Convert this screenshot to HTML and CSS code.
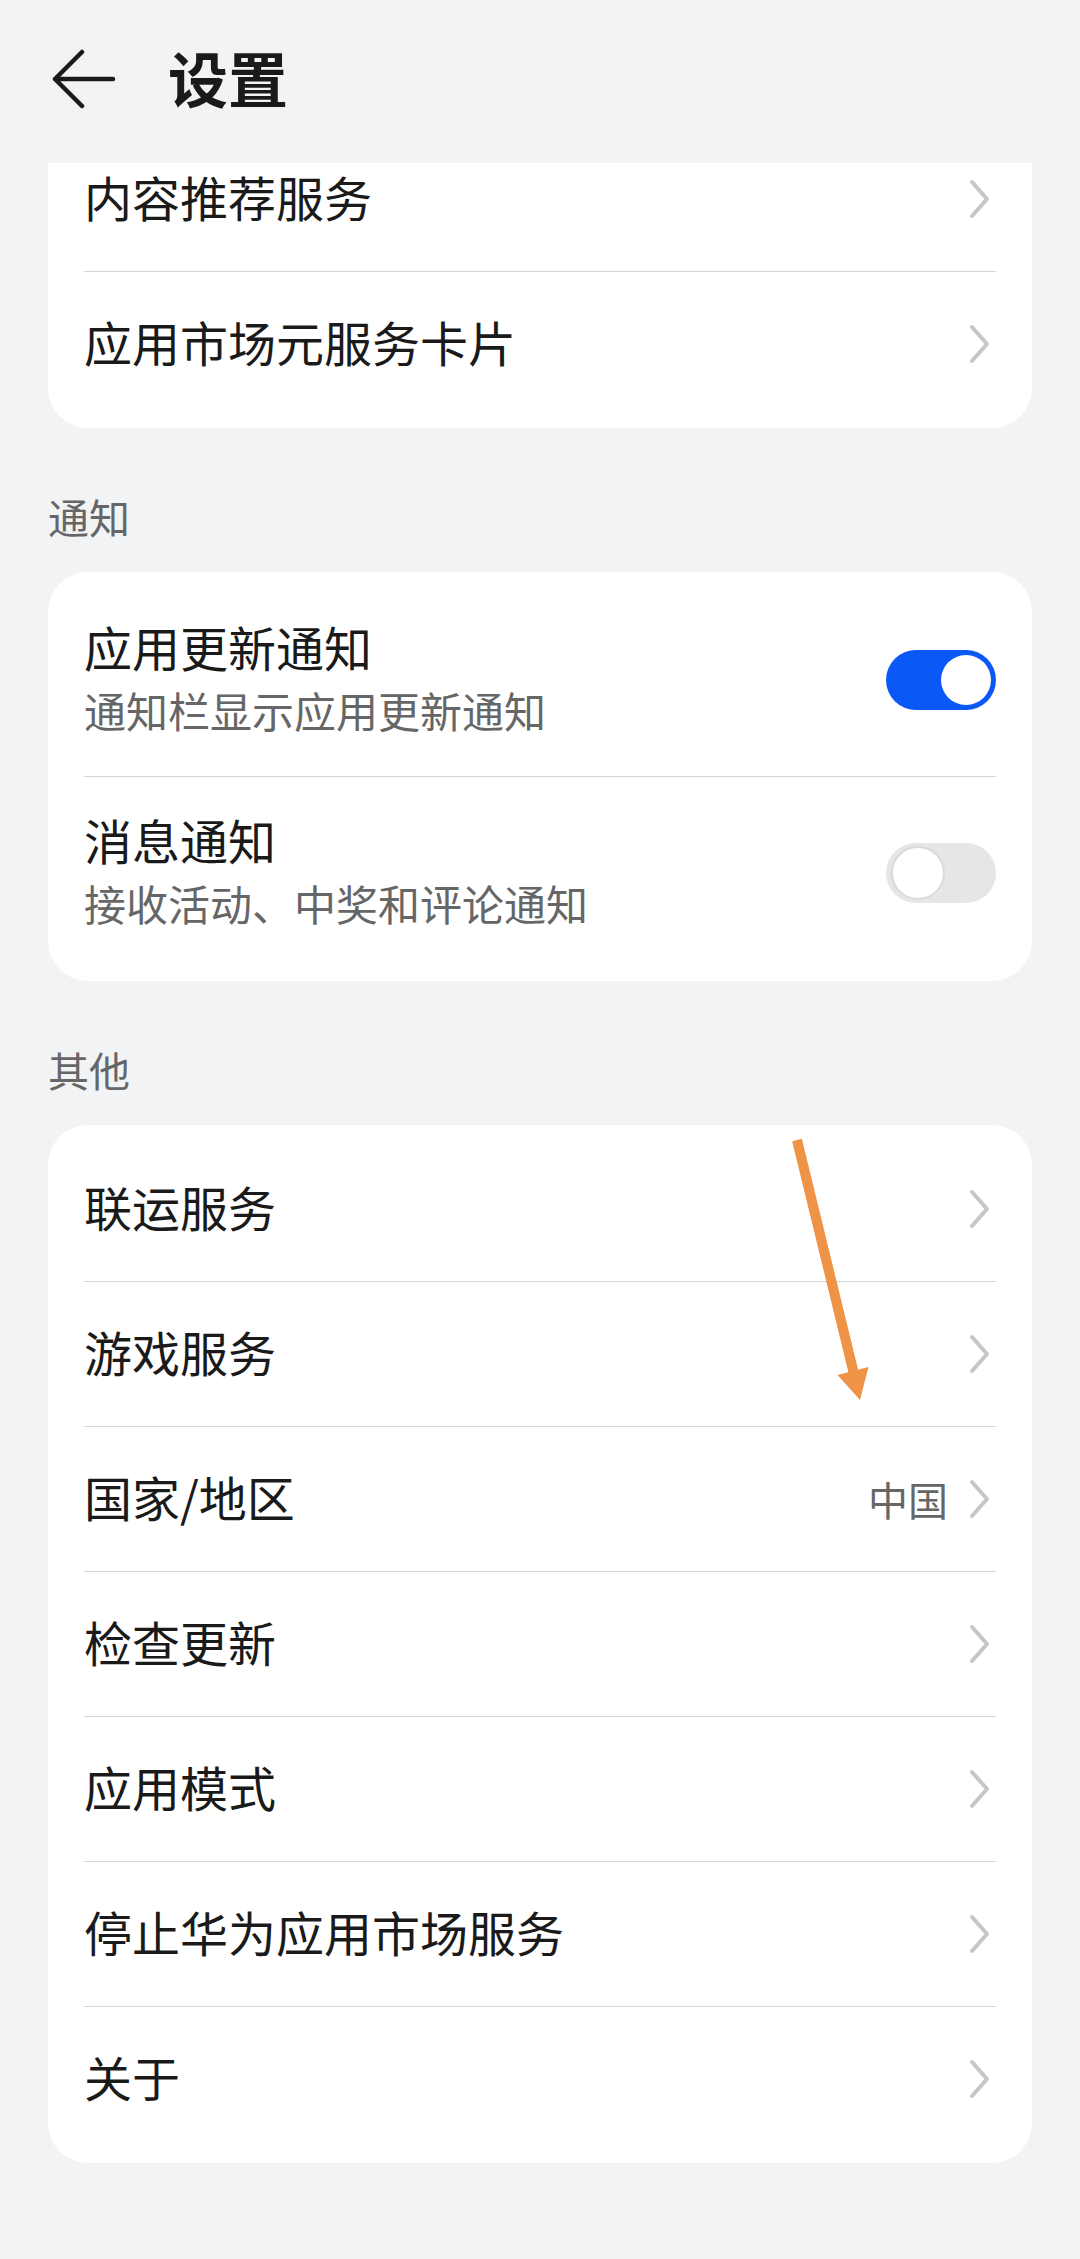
FILE: index.html
```html
<!DOCTYPE html>
<html lang="zh-CN">
<head>
  <meta charset="UTF-8" />
  <meta name="viewport" content="width=device-width, initial-scale=1.0"/>
  <title>设置</title>
  <link rel="stylesheet" href="styles.css">
</head>
<body>
  <div class="screen">
    <header class="topbar">
      <svg class="back" viewBox="0 0 68 60">
        <path d="M32 3 L5 30 L32 57 M5 30 H63" />
      </svg>
      <h1>设置</h1>
    </header>

    <main class="content">
      <section class="card card-cut">
        <div class="row">
          <span class="title">内容推荐服务</span>
          <svg class="chev" viewBox="0 0 28 48"><polyline points="4,7 19,24 4,41" /></svg>
        </div>
        <div class="row">
          <span class="title">应用市场元服务卡片</span>
          <svg class="chev" viewBox="0 0 28 48"><polyline points="4,7 19,24 4,41" /></svg>
        </div>
      </section>

      <h2 class="group">通知</h2>
      <section class="card">
        <div class="row row-tall">
          <div class="text">
            <div class="title">应用更新通知</div>
            <div class="sub">通知栏显示应用更新通知</div>
          </div>
          <span class="switch on"></span>
        </div>
        <div class="row row-tall">
          <div class="text">
            <div class="title">消息通知</div>
            <div class="sub">接收活动、中奖和评论通知</div>
          </div>
          <span class="switch"></span>
        </div>
      </section>

      <h2 class="group">其他</h2>
      <section class="card">
        <div class="row">
          <span class="title">联运服务</span>
          <svg class="chev" viewBox="0 0 28 48"><polyline points="4,7 19,24 4,41" /></svg>
        </div>
        <div class="row">
          <span class="title">游戏服务</span>
          <svg class="chev" viewBox="0 0 28 48"><polyline points="4,7 19,24 4,41" /></svg>
        </div>
        <div class="row">
          <span class="title">国家/地区</span>
          <div class="right">
            <span class="value">中国</span>
            <svg class="chev" viewBox="0 0 28 48"><polyline points="4,7 19,24 4,41" /></svg>
          </div>
        </div>
        <div class="row">
          <span class="title">检查更新</span>
          <svg class="chev" viewBox="0 0 28 48"><polyline points="4,7 19,24 4,41" /></svg>
        </div>
        <div class="row">
          <span class="title">应用模式</span>
          <svg class="chev" viewBox="0 0 28 48"><polyline points="4,7 19,24 4,41" /></svg>
        </div>
        <div class="row">
          <span class="title">停止华为应用市场服务</span>
          <svg class="chev" viewBox="0 0 28 48"><polyline points="4,7 19,24 4,41" /></svg>
        </div>
        <div class="row">
          <span class="title">关于</span>
          <svg class="chev" viewBox="0 0 28 48"><polyline points="4,7 19,24 4,41" /></svg>
        </div>
      </section>
    </main>

    <!-- hand-drawn pointer over the list -->
    <svg class="mark" viewBox="0 0 100 280">
      <line x1="17" y1="10" x2="74" y2="244" />
      <polygon points="57.5,245 88.5,237 80,270" />
    </svg>
  </div>
</body>
</html>
```

FILE: styles.css
```css
* {
  margin: 0;
  padding: 0;
  box-sizing: border-box;
}

body {
  background-color: #f1f3f5;
  font-family: "Noto Sans CJK SC", "Noto Sans", sans-serif;
  color: #1a1a1a;
}

.screen {
  position: relative;
  width: 1080px;
  height: 2259px;
  overflow: hidden;
}

.topbar {
  height: 163px;
  padding: 47px 0 0 50px;
  display: flex;
  align-items: flex-start;
}

.topbar .back {
  width: 68px;
  height: 60px;
  margin-top: 2px;
  fill: none;
  stroke: #1a1a1a;
  stroke-width: 4.5;
  stroke-linecap: round;
  stroke-linejoin: round;
}

.topbar h1 {
  margin-left: 50px;
  font-size: 60px;
  line-height: 60px;
  font-weight: 700;
}

.content {
  height: 2096px;
  overflow: hidden;
  padding: 0 48px;
}

.card {
  background: #fff;
  border-radius: 40px;
  padding: 12px 36px;
}

/* the first card is scrolled under the title bar */
.card-cut {
  margin-top: -48px;
}

.row {
  height: 144px;
  padding-bottom: 6px;
  display: flex;
  align-items: center;
  justify-content: space-between;
}

.row + .row {
  height: 145px;
  border-top: 1px solid #d6d6d6;
}

.row-tall {
  height: 192px;
}

.row-tall + .row-tall {
  height: 193px;
}

.row .chev,
.row .right,
.row .switch {
  margin-bottom: -6px;
}

.title {
  font-size: 48px;
  line-height: 60px;
}

.sub {
  margin-top: 6px;
  font-size: 42px;
  line-height: 56px;
  color: #666;
}

.right {
  display: flex;
  align-items: center;
}

.right .chev {
  margin-bottom: 0;
}

.value {
  margin-right: 20px;
  font-size: 40px;
  line-height: 52px;
  color: #666;
}

.chev {
  width: 28px;
  height: 48px;
  fill: none;
  stroke: #c6c6c6;
  stroke-width: 4;
  stroke-linecap: round;
  stroke-linejoin: round;
}

.group {
  margin: 62px 0 30px;
  font-size: 41px;
  line-height: 52px;
  font-weight: 400;
  color: #666;
}

.switch {
  width: 110px;
  height: 60px;
  padding: 5px;
  border-radius: 30px;
  background: #e6e6e6;
  display: flex;
  align-items: center;
}

.switch::after {
  content: "";
  width: 50px;
  height: 50px;
  border-radius: 50%;
  background: #fff;
  border: 2px solid #dadada;
}

.switch.on {
  background: #0a59f7;
  justify-content: flex-end;
}

.switch.on::after {
  border: none;
}

.mark {
  position: absolute;
  left: 780px;
  top: 1130px;
  width: 100px;
  height: 280px;
}

.mark line {
  stroke: #ef9346;
  stroke-width: 10;
}

.mark polygon {
  fill: #ef9346;
}
```
